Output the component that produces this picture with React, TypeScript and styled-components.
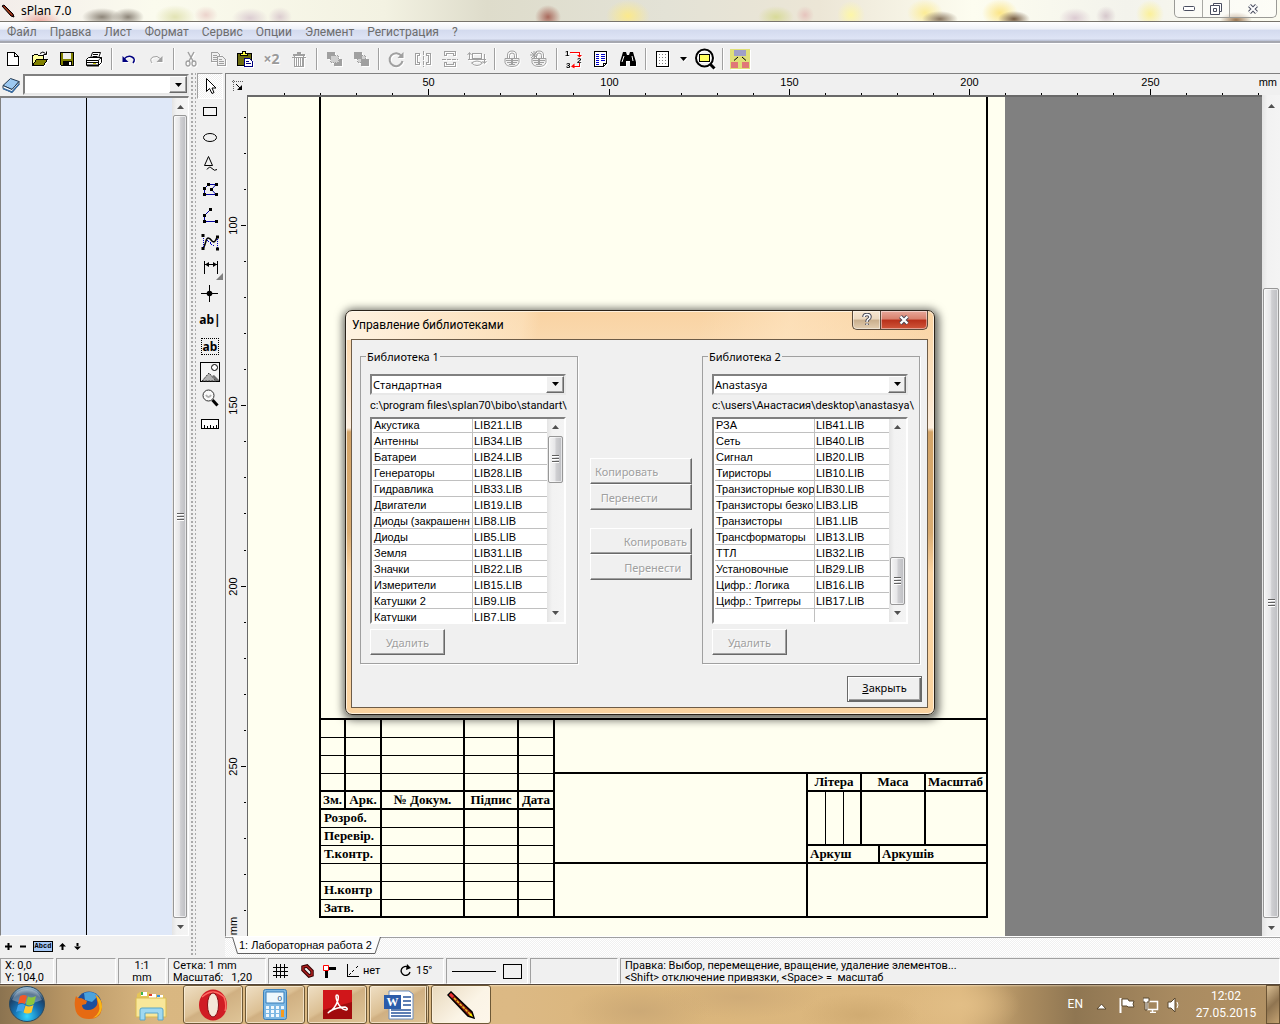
import React from "react";
import styled, { createGlobalStyle, css } from "styled-components";

const ui = `"Noto Sans", "DejaVu Sans", sans-serif`;
const narrow = `Roboto, "Noto Sans", sans-serif`;
const grid = `"Liberation Sans", Arial, sans-serif`;
const serif = `"Liberation Serif", "Times New Roman", serif`;

const Global = createGlobalStyle`
  * { box-sizing: border-box; }
  body { margin: 0; background: #f0f0f0; overflow: hidden; }
  button, select, input { font: inherit; color: inherit; }
`;

/* ---------- frame of the program ---------- */

const Desktop = styled.div`
  position: relative;
  display: flex;
  flex-direction: column;
  height: 100vh;
  font: 11px/14px ${ui};
  color: #000;
`;

const TitleBar = styled.header`
  display: flex;
  flex: none;
  height: 22px;
  border-bottom: 1px solid #77746c;
  background:
    radial-gradient(ellipse 22px 12px at 40px 22px, #efa9a0 0, transparent 100%),
    radial-gradient(ellipse 20px 9px at 102px 17px, #8d8579 0, transparent 100%),
    radial-gradient(ellipse 16px 9px at 128px 17px, #8d8579 0, transparent 100%),
    radial-gradient(ellipse 20px 12px at 175px 17px, #e2e3b4 0, transparent 100%),
    radial-gradient(ellipse 12px 9px at 206px 15px, #ecd3cc 0, transparent 100%),
    radial-gradient(ellipse 18px 10px at 250px 18px, #dccdd2 0, transparent 100%),
    radial-gradient(ellipse 12px 10px at 280px 17px, #dccdd0 0, transparent 100%),
    radial-gradient(ellipse 13px 12px at 548px 17px, #a9695c 0, transparent 100%),
    radial-gradient(ellipse 22px 16px at 628px 16px, #fbe98c 0, transparent 100%),
    radial-gradient(ellipse 18px 11px at 776px 17px, #d8da98 0, transparent 100%),
    radial-gradient(ellipse 9px 9px at 805px 15px, #e6c4bd 0, transparent 100%),
    radial-gradient(ellipse 14px 14px at 851px 15px, #fdf6a8 0, transparent 100%),
    radial-gradient(ellipse 18px 8px at 940px 19px, #8a7760 0, transparent 100%),
    radial-gradient(ellipse 18px 14px at 925px 13px, #fcec96 0, transparent 100%),
    radial-gradient(ellipse 16px 8px at 1014px 19px, #765c42 0, transparent 100%),
    radial-gradient(ellipse 18px 14px at 1000px 13px, #fce586 0, transparent 100%),
    radial-gradient(ellipse 16px 10px at 1075px 18px, #dccbd2 0, transparent 100%),
    radial-gradient(ellipse 10px 10px at 1106px 16px, #d6c8cc 0, transparent 100%),
    radial-gradient(ellipse 14px 14px at 1150px 14px, #fbf09a 0, transparent 100%),
    radial-gradient(ellipse 16px 8px at 1236px 20px, #9a7550 0, transparent 100%),
    linear-gradient(90deg, #f3edea 0, #fbfbee 12%, #f3f2e2 30%, #dedccb 38%, #e3e2d6 52%, #ece6d6 64%, #fdfdf0 76%, #f3f3ec 88%, #fbfbf0 100%);
`;

const AppTitle = styled.h1`
  display: flex;
  align-items: center;
  flex: 1;
  gap: 6px;
  margin: 0;
  padding-left: 1px;
  font: 12px/16px ${ui};
`;

const WindowButtons = styled.div`
  display: flex;
  height: 18px;
  margin-right: 3px;
  border: 1px solid #9a9a96;
  border-top: 0;
  border-radius: 0 0 5px 5px;
  background: rgba(255, 255, 255, 0.45);
`;

const WindowButton = styled.button<{ $wide?: boolean }>`
  display: grid;
  place-items: center;
  width: ${(p) => (p.$wide ? 47 : 27)}px;
  padding: 0;
  border: 0;
  border-left: 1px solid #a9a9a4;
  background: none;
  &:first-child { border-left: 0; }
`;

const MenuBar = styled.nav`
  display: flex;
  flex: none;
  align-items: center;
  gap: 13px;
  height: 21px;
  padding: 1px 7px 0;
  border-bottom: 2px solid #a6a8b0;
  background: linear-gradient(#fff 0, #eef1f8 38%, #d3daee 42%, #dee4f5 88%, #b5bccf 100%);
  font: 12px/16px ${narrow};
`;

const MenuItem = styled.button`
  padding: 0;
  border: 0;
  background: none;
  color: #6d6d6d;
`;

const Toolbar = styled.div`
  display: flex;
  flex: none;
  align-items: center;
  height: 30px;
  border-top: 1px solid #fff;
  svg { filter: drop-shadow(1px 1px 0 #fff); }
`;

const ToolButton = styled.button<{ $narrow?: boolean }>`
  display: grid;
  place-items: center;
  width: ${(p) => (p.$narrow ? 15 : 27)}px;
  height: 28px;
  padding: 0 2px 0 0;
  border: 0;
  background: none;
`;

const Separator = styled.span`
  width: 8px;
  height: 22px;
  border-left: 3px solid transparent;
  background: linear-gradient(90deg, #a0a0a0 1px, #fff 1px, #fff 2px, transparent 2px) padding-box;
`;

const Times = styled.span`
  color: #9a9a9a;
  font: bold 14px/20px ${ui};
  text-shadow: 1px 1px #fff;
`;

const Body = styled.main`
  display: flex;
  flex: 1;
  min-height: 0;
`;

/* ---------- scroll bars ---------- */

const ScrollTrack = styled.div<{ $w: number; $top?: number }>`
  display: flex;
  flex: none;
  flex-direction: column;
  width: ${(p) => p.$w}px;
  padding-top: ${(p) => p.$top ?? 0}px;
  background: linear-gradient(90deg, #e4e4e4, #f2f2f2 30%, #f4f4f4);
`;

const ScrollArrow = styled.button`
  display: grid;
  place-items: center;
  height: 17px;
  padding: 0;
  border: 0;
  background: none;
`;

const Space = styled.span<{ $grow: number }>`
  flex: ${(p) => p.$grow} 0 0;
`;

const Thumb = styled.span<{ $grow: number }>`
  display: grid;
  flex: ${(p) => p.$grow} 0 0;
  place-items: center;
  margin: 0 1px;
  border: 1px solid #979797;
  border-radius: 2px;
  background: linear-gradient(90deg, #f5f5f5, #e6e6e8 45%, #cfcfd2 55%, #bdbec2);
  box-shadow: inset 0 0 0 1px rgba(255, 255, 255, 0.6);
`;

const Arrow = ({ down }: { down?: boolean }) => (
  <svg width="7" height="4" viewBox="0 0 7 4" aria-hidden="true">
    <path d={down ? "M0 0h7L3.5 4z" : "M0 4h7L3.5 0z"} fill="#505050" />
  </svg>
);

function ScrollBar({ w, top, before, thumb, after }: { w: number; top?: number; before: number; thumb: number; after: number }) {
  return (
    <ScrollTrack $w={w} $top={top}>
      <ScrollArrow aria-label="Вверх"><Arrow /></ScrollArrow>
      <Space $grow={before} />
      <Thumb $grow={thumb}>
        <svg width="7" height="8" viewBox="0 0 7 8" shapeRendering="crispEdges" aria-hidden="true">
          <path d="M0 .5h7M0 3.5h7M0 6.5h7" stroke="#606060" />
          <path d="M0 1.5h7M0 4.5h7M0 7.5h7" stroke="#fff" />
        </svg>
      </Thumb>
      <Space $grow={after} />
      <ScrollArrow aria-label="Вниз"><Arrow down /></ScrollArrow>
    </ScrollTrack>
  );
}

/* ---------- drop-downs ---------- */

const ComboBox = styled.span`
  display: grid;
  flex: 1;
  grid-template-columns: 1fr 18px;
  height: 21px;
  border: 2px solid;
  border-color: #808080 #e8e8e8 #e8e8e8 #808080;
  background: #fff;
`;

const ComboSelect = styled.select`
  grid-area: 1 / 1 / 2 / 3;
  min-width: 0;
  padding: 1px 20px 0 1px;
  border: 0;
  border-radius: 0;
  outline: 0;
  appearance: none;
  background: none;
`;

const ComboArrow = styled.span`
  display: grid;
  grid-area: 1 / 2;
  place-items: center;
  border: 1px solid;
  border-color: #fff #696969 #696969 #fff;
  background: #f0f0f0;
  box-shadow: inset -1px -1px #a0a0a0;
  pointer-events: none;
`;

function Combo({ label, value }: { label: string; value: string }) {
  return (
    <ComboBox>
      <ComboSelect aria-label={label} defaultValue={value}>
        <option>{value}</option>
      </ComboSelect>
      <ComboArrow>
        <svg width="7" height="4" viewBox="0 0 7 4" aria-hidden="true"><path d="M0 0h7L3.5 4z" /></svg>
      </ComboArrow>
    </ComboBox>
  );
}

/* ---------- library panel on the left ---------- */

const LibraryPanel = styled.aside`
  display: flex;
  flex: none;
  flex-direction: column;
  width: 190px;
`;

const LibraryPicker = styled.div`
  display: flex;
  align-items: center;
  gap: 3px;
  height: 23px;
  padding: 0 1px 0 2px;
`;

const LibraryList = styled.div`
  display: flex;
  flex: 1;
  margin-right: 1px;
  border: 1px solid;
  border-width: 2px 1px 1px;
  border-color: #808080 #fff #fff #808080;
`;

const LibraryColumn = styled.div`
  flex: 1;
  background: #dfe8f8;
  & + & { border-left: 1px solid #000; }
`;

const LibraryTools = styled.div`
  display: flex;
  align-items: center;
  height: 21px;
  padding-left: 1px;
`;

const TinyButton = styled.button<{ $wide?: boolean }>`
  display: grid;
  place-items: center;
  width: ${(p) => (p.$wide ? 24 : 15)}px;
  height: 16px;
  padding: 0;
  border: 0;
  background: none;
`;

const AbcdTag = styled.span`
  width: 20px;
  height: 11px;
  border: 1px solid #000;
  background: #a5c8f5;
  font: bold 7px/9px "Liberation Mono", monospace;
`;

const Grip = styled.div`
  flex: none;
  width: 6px;
  background: radial-gradient(circle at 1px 1px, #a8a8a8 0 0.7px, transparent 1px) 1px 0 / 4px 4px;
`;

/* ---------- drawing tools ---------- */

const checker = css`
  background: repeating-conic-gradient(#fff 0 25%, #f0f0f0 0 50%) 0 0 / 2px 2px;
`;

const DrawTools = styled.div`
  display: flex;
  flex: none;
  flex-direction: column;
  width: 29px;
  padding: 0 2px 0 1px;
`;

const DrawTool = styled.button<{ $active?: boolean }>`
  display: grid;
  flex: none;
  place-items: center;
  height: 26px;
  padding: 0;
  border: 1px solid transparent;
  background: none;
  font: bold 12px/16px ${ui};
  ${(p) =>
    p.$active &&
    css`
      ${checker}
      border-color: #a0a0a0 #fff #fff #a0a0a0;
    `}
`;

/* ---------- sheet area ---------- */

const Workspace = styled.section`
  display: flex;
  flex: 1;
  flex-direction: column;
  min-width: 0;
  border-top: 1px solid #808080;
`;

const SheetView = styled.div`
  display: grid;
  flex: 1;
  grid-template: 21px minmax(0, 1fr) / 21px minmax(0, 1fr) 18px;
  min-height: 0;
  border-left: 1px solid #808080;
  border-bottom: 1px solid #fff;
`;

const Corner = styled.div`
  padding: 6px 0 0 6px;
`;

const TopRulerBox = styled.div`
  grid-column: 2 / 4;
  overflow: hidden;
`;

const SideRulerBox = styled.div`
  overflow: hidden;
`;

const RulerSvg = styled.svg`
  display: block;
  font: 11px ${grid};
`;

const Canvas = styled.div`
  display: flex;
  overflow: hidden;
  border: 1px solid #696969;
  border-width: 2px 0 0 1px;
  background: #808080;
`;

const Paper = styled.div`
  display: flex;
  flex: none;
  width: 757px;
  padding: 0 17px 18px 71px;
  background: #fffff0;
`;

const Frame = styled.div`
  display: flex;
  flex: 1;
  flex-direction: column;
  justify-content: flex-end;
  border: 2px solid #000;
  border-top: 0;
`;

const Stamp = styled.div`
  display: flex;
  border-top: 2px solid #000;
  font: bold 13px/15px ${serif};
`;

const Signatures = styled.table`
  flex: none;
  width: 234px;
  border-collapse: separate;
  border-spacing: 0;
  table-layout: fixed;
`;

const SignCell = styled.td<{ $heavy?: boolean; $last?: boolean; $label?: boolean }>`
  height: ${(p) => (p.$last ? 16 : 18)}px;
  padding: ${(p) => (p.$label ? "0 0 0 3px" : "0")};
  border: solid #000;
  border-width: 0 2px ${(p) => (p.$last ? 0 : p.$heavy ? 2 : 1)}px 0;
  text-align: ${(p) => (p.$label ? "left" : "center")};
  vertical-align: top;
  white-space: nowrap;
`;

const StampInfo = styled.div`
  display: flex;
  flex: 1;
  flex-direction: column;
`;

const StampRow = styled.div<{ $h: number; $rule?: boolean }>`
  display: flex;
  height: ${(p) => p.$h}px;
  border-bottom: ${(p) => (p.$rule ? "2px solid #000" : 0)};
`;

const StampCell = styled.div<{ $w?: number; $line?: number; $left?: boolean }>`
  flex: ${(p) => (p.$w ? "none" : "1")};
  width: ${(p) => (p.$w ? `${p.$w}px` : "auto")};
  padding-left: ${(p) => (p.$left ? 2 : 0)}px;
  border-right: ${(p) => p.$line ?? 0}px solid #000;
  text-align: ${(p) => (p.$left ? "left" : "center")};
  white-space: nowrap;
`;

const SheetTabs = styled.div`
  display: flex;
  flex: none;
  height: 20px;
  padding-left: 7px;
  border-top: 1px solid #a0a0a0;
  ${checker}
`;

const SheetTab = styled.button`
  display: flex;
  height: 17px;
  margin-top: -1px;
  padding: 0;
  border: 0;
  background: none;
  font: 11px/16px ${grid};
`;

const TabLabel = styled.span`
  padding-top: 1px;
  border-bottom: 1px solid #606060;
  background: #fcfcfc;
  line-height: 15px;
`;

/* ---------- status bar ---------- */

const StatusBar = styled.footer`
  display: flex;
  flex: none;
  gap: 2px;
  height: 27px;
  padding-top: 1px;
  font: 11px/12px ${narrow};
`;

const Panel = styled.div<{ $w?: number; $center?: boolean }>`
  display: flex;
  flex: ${(p) => (p.$w ? "none" : "1")};
  flex-direction: column;
  width: ${(p) => (p.$w ? `${p.$w}px` : "auto")};
  padding-top: 1px;
  padding-left: ${(p) => (p.$center ? 0 : 4)}px;
  border: 1px solid;
  border-color: #a0a0a0 #fff #fff #a0a0a0;
  text-align: ${(p) => (p.$center ? "center" : "left")};
  white-space: pre;
`;

const PanelIcons = styled(Panel)`
  flex-direction: row;
  align-items: center;
  padding-top: 0;
`;

const StatusButton = styled.button<{ $w: number }>`
  display: flex;
  align-items: center;
  gap: 4px;
  width: ${(p) => p.$w}px;
  padding: 0;
  border: 0;
  background: none;
`;

/* ---------- task bar ---------- */

const TaskBar = styled.footer`
  display: flex;
  flex: none;
  height: 40px;
  border-top: 1px solid #54463a;
  background:
    linear-gradient(rgba(255, 240, 210, 0.5) 0, rgba(255, 240, 210, 0) 2px),
    radial-gradient(ellipse 70px 26px at 640px 26px, #cca976 0, transparent 100%),
    radial-gradient(ellipse 80px 22px at 740px 12px, #d0ac78 0, transparent 100%),
    radial-gradient(ellipse 60px 22px at 860px 30px, #d0ab72 0, transparent 100%),
    radial-gradient(ellipse 60px 30px at 960px 20px, #e2be86 0, transparent 100%),
    linear-gradient(90deg, #8b7350 0, #b79564 5%, #d9b781 12%, #dcb984 40%, #dab57b 50%, #ddb87f 75%, #ac8d60 80%, #8f7652 84%, #a98b61 92%, #b39264 100%);
  color: #fff;
`;

const TaskButton = styled.button<{ $open?: boolean; $stack?: boolean; $active?: boolean }>`
  display: grid;
  place-items: center;
  width: 60px;
  margin-right: 2px;
  padding: 0;
  border: 0;
  background: none;
  ${(p) =>
    p.$open &&
    css`
      border: 1px solid #6d5836;
      border-radius: 3px;
      box-shadow: inset 0 0 0 1px rgba(255, 245, 225, 0.65);
      background: ${p.$active
        ? "linear-gradient(135deg, #e8d9bd, #fbf4e6 60%, #fdf6ea)"
        : "linear-gradient(150deg, #efdfc4, #dcc094 45%, #d0b082 50%, #dfc598)"};
    `}
  ${(p) =>
    p.$stack &&
    css`
      border-right: 3px double #6d5836;
    `}
`;

const TaskButtons = styled.div`
  display: flex;
  flex: 1;
`;

const StartButton = styled.button`
  width: 59px;
  padding: 0 6px 0 0;
  border: 0;
  background: none;
`;

const Tray = styled.div`
  display: flex;
  align-items: center;
  gap: 8px;
  font: 12px/17px ${narrow};
`;

const Clock = styled.time`
  width: 64px;
  margin-left: 5px;
  text-align: center;
`;

const ShowDesktop = styled.button`
  width: 14px;
  align-self: stretch;
  border: 1px solid #6a5334;
  background: linear-gradient(135deg, #d8bd92, #8f7450 50%, #c4a272);
`;

/* ---------- dialog ---------- */

const DialogLayer = styled.div`
  position: absolute;
  inset: 0;
  display: grid;
  place-items: center;
  pointer-events: none;
`;

const Dialog = styled.section`
  display: flex;
  flex-direction: column;
  width: 590px;
  padding: 0 6px 6px 5px;
  border: 1px solid #2a231a;
  border-radius: 7px;
  background:
    linear-gradient(100deg, rgba(255, 246, 232, 0.9) 0, rgba(255, 235, 205, 0.4) 30%, transparent 33%, transparent 60%, rgba(255, 230, 195, 0.6) 75%, rgba(250, 210, 160, 0.3) 100%) 0 0 / 100% 29px no-repeat,
    linear-gradient(#f9d3a2 0, #fbe3c6 20%, #fceede 29%, #d3a468 30%, #d9ac72 55%, #fbd4a2 65%, #fad3a0 100%);
  box-shadow: inset 0 0 0 1px rgba(255, 250, 240, 0.75), 1px 2px 9px 3px rgba(0, 0, 0, 0.6);
  pointer-events: auto;
`;

const DialogHead = styled.header`
  display: flex;
  align-items: flex-start;
  height: 28px;
`;

const DialogTitle = styled.h2`
  flex: 1;
  margin: 0;
  padding: 5px 0 0 1px;
  font: 12px/18px ${narrow};
`;

const CaptionButton = styled.button<{ $close?: boolean }>`
  display: grid;
  place-items: center;
  width: ${(p) => (p.$close ? 48 : 28)}px;
  height: 19px;
  padding: 0;
  border: 1px solid #5b4a3a;
  border-top: 0;
  border-radius: ${(p) => (p.$close ? "0 0 5px 0" : "0 0 0 5px")};
  border-right-width: ${(p) => (p.$close ? 1 : 0)}px;
  background: ${(p) =>
    p.$close
      ? "linear-gradient(#e8a89a 0, #d8806c 45%, #b8301a 50%, #d0563a 100%)"
      : "linear-gradient(#f8e6d0 0, #ecd8bf 45%, #c9ae8c 50%, #e3cdb0 100%)"};
  box-shadow: inset 0 0 0 1px rgba(255, 255, 255, 0.45);
  color: #fff;
`;

const DialogBody = styled.div`
  display: flex;
  flex-direction: column;
  gap: 12px;
  padding: 10px 5px 5px 8px;
  border: 1px solid #6d5c48;
  background: #f0f0f0;
`;

const Columns = styled.div`
  display: flex;
  padding-right: 2px;
`;

const Group = styled.fieldset`
  display: flex;
  flex: none;
  flex-direction: column;
  width: 218px;
  min-width: 0;
  margin: 0;
  padding: 10px 11px 8px 9px;
  border: 1px solid #a0a0a0;
  box-shadow: 1px 1px #fff;
`;

const Legend = styled.legend`
  margin-left: -4px;
  padding: 0 1px;
  background: #f0f0f0;
  line-height: 14px;
`;

const ComboLine = styled.div`
  display: flex;
`;

const PathLine = styled.p`
  margin: 4px 0;
  font-family: ${narrow};
  white-space: nowrap;
`;

const ListBox = styled.div`
  display: flex;
  justify-content: space-between;
  height: 207px;
  padding-left: 1px;
  overflow: hidden;
  border: 2px solid;
  border-color: #808080 #fff #fff #808080;
  background: #fff;
`;

const FileTable = styled.table`
  width: 174px;
  margin-top: -2px;
  align-self: flex-start;
  border-collapse: separate;
  border-spacing: 0;
  table-layout: fixed;
  font: 11px/14px ${grid};
`;

const FileCell = styled.td<{ $name?: boolean }>`
  height: 16px;
  padding: 1px 0 0 1px;
  overflow: hidden;
  border-bottom: 1px solid #c0c0c0;
  border-right: ${(p) => (p.$name ? "1px solid #c0c0c0" : 0)};
  white-space: nowrap;
`;

const Push = styled.button<{ $w: number; $align?: string; $main?: boolean }>`
  width: ${(p) => p.$w}px;
  height: 26px;
  padding: 2px 4px 0;
  border: 1px solid;
  border-color: #fff #696969 #696969 #fff;
  background: #f0f0f0;
  box-shadow: inset -1px -1px #a0a0a0;
  text-align: ${(p) => p.$align ?? "center"};
  &:disabled { color: #a0a0a0; text-shadow: 1px 1px #fff; }
  ${(p) =>
    p.$main &&
    css`
      border-color: #696969;
      padding: 0 4px 2px;
      box-shadow: inset 1px 1px #fff, inset -1px -1px #696969, inset -2px -2px #a0a0a0;
    `}
`;

const DeleteRow = styled.div`
  display: flex;
  margin-top: 5px;
`;

const Transfer = styled.div`
  display: flex;
  flex: 1;
  flex-direction: column;
  align-items: center;
  padding: 108px 0 0 2px;
`;

const Pair = styled.div`
  display: flex;
  flex-direction: column;
  margin-bottom: 18px;
`;

const Footer = styled.div`
  display: flex;
  justify-content: flex-end;
`;

/* ---------- data ---------- */

const menu = ["Файл", "Правка", "Лист", "Формат", "Сервис", "Опции", "Элемент", "Регистрация", "?"];

const standard = [
  ["Акустика", "LIB21.LIB"], ["Антенны", "LIB34.LIB"], ["Батареи", "LIB24.LIB"], ["Генераторы", "LIB28.LIB"],
  ["Гидравлика", "LIB33.LIB"], ["Двигатели", "LIB19.LIB"], ["Диоды (закрашенн", "LIB8.LIB"], ["Диоды", "LIB5.LIB"],
  ["Земля", "LIB31.LIB"], ["Значки", "LIB22.LIB"], ["Измерители", "LIB15.LIB"], ["Катушки 2", "LIB9.LIB"], ["Катушки", "LIB7.LIB"],
];

const anastasya = [
  ["РЗА", "LIB41.LIB"], ["Сеть", "LIB40.LIB"], ["Сигнал", "LIB20.LIB"], ["Тиристоры", "LIB10.LIB"],
  ["Транзисторные кор", "LIB30.LIB"], ["Транзисторы безко", "LIB3.LIB"], ["Транзисторы", "LIB1.LIB"], ["Трансформаторы", "LIB13.LIB"],
  ["ТТЛ", "LIB32.LIB"], ["Установочные", "LIB29.LIB"], ["Цифр.: Логика", "LIB16.LIB"], ["Цифр.: Триггеры", "LIB17.LIB"], ["", ""],
];

/* ---------- icons ---------- */

const Ico = ({ w = 20, h = 20, children }: { w?: number; h?: number; children: React.ReactNode }) => (
  <svg width={w} height={h} viewBox={`0 0 ${w} ${h}`} fill="none" aria-hidden="true">{children}</svg>
);
const crisp = { shapeRendering: "crispEdges" as const };
const G = "#a0a0a0";

type Item = { name: string; icon: React.ReactNode; narrow?: boolean } | null;

const pencil = (
  <Ico w={14} h={14}>
    <path d="M1 2l2-1 9 9 1 3-3-1z" fill="#8b1a10" stroke="#000" />
    <path d="M3 3l8 8" stroke="#a05020" />
  </Ico>
);

const lockBody = (
  <g>
    <path d="M5.500 9V6q0-4 4.500-4T14.500 6v3M7.500 9V6.500q0-2.500 2.500-2.500t2.500 2.500V9" stroke={G} />
    <path d="M3 9.500h14v4q-1 4-7 4t-7-4z" stroke={G} fill="#f0f0f0" />
    <path d="M4 11.500h12M5 13.500h10M7 15.500h6" stroke={G} />
    <path d="M10 10v5" stroke={G} strokeWidth="2" />
  </g>
);

const tools: Item[] = [
  { name: "Новый", icon: <Ico><path {...crisp} d="M4.500 3.500h7l4 4v9h-11zM11.500 3.500v4h4" fill="#fff" stroke="#000" /></Ico> },
  { name: "Открыть", icon: <Ico>
    <path {...crisp} d="M2.500 16V6.500h1l1-1h3l1 1h5v3" fill="#ffff9c" stroke="#000" />
    <path {...crisp} d="M2.500 16.500l4-6h11l-4 6z" fill="#808000" stroke="#000" />
    <path d="M10 4.500q3-3 5.500 0M13.500 5.500h3v-3" stroke="#000" />
  </Ico> },
  { name: "Сохранить", icon: <Ico><g {...crisp}>
    <path d="M3.500 3.500h13v13h-12l-1-1z" fill="#808000" stroke="#000" />
    <path d="M6 4h8v6H6z" fill="#f0f0f0" />
    <path d="M6 12h9v5H6z" fill="#000" /><path d="M12 13h2v3h-2z" fill="#fff" />
  </g></Ico> },
  { name: "Печать", icon: <Ico>
    <path d="M6.500 9L8.500 3.500h8L14.500 9" fill="#fff" stroke="#000" />
    <path d="M9 5.500h5M8.500 7.500h5" stroke="#000" />
    <path d="M2.500 10.500l2-2h13v5l-3 3h-12z" fill="#fff" stroke="#000" />
    <path d="M2.500 11.500h12v5M2.500 13.500h12M14.500 11l3-2.500" stroke="#000" /><path d="M9 14.500h3" stroke="#c8c800" /><path d="M3 16.500h12" stroke="#000" strokeWidth="2" />
  </Ico> },
  null,
  { name: "Отменить", icon: <Ico><path d="M5 10q4-4 8-2t1 6" stroke="#000080" strokeWidth="1.500" /><path d="M3.500 7v6h6z" fill="#000080" /></Ico> },
  { name: "Повторить", icon: <Ico><path d="M15 10q-4-4-8-2t-1 6" stroke={G} /><path d="M16.500 7v6h-6z" fill={G} /></Ico> },
  null,
  { name: "Вырезать", icon: <Ico><path d="M7 3l5 9M13 3l-5 9" stroke={G} strokeWidth="1.500" /><ellipse cx="7" cy="14.500" rx="2" ry="2.500" stroke={G} strokeWidth="1.300" /><ellipse cx="13" cy="14.500" rx="2" ry="2.500" stroke={G} strokeWidth="1.300" /></Ico> },
  { name: "Копировать", icon: <Ico><g {...crisp} stroke={G} fill="#f0f0f0"><path d="M3.500 3.500h6l2 2v7h-8z" /><path d="M5 6.500h4M5 8.500h4M5 10.500h4" /><path d="M9.500 7.500h5l3 3v6h-8z" /><path d="M11 10.500h3M11 12.500h5M11 14.500h5" /></g></Ico> },
  { name: "Вставить", icon: <Ico><g {...crisp}>
    <path d="M2.500 4.500h14v12h-14z" fill="#6b6b10" stroke="#000" /><path d="M5.500 6.500v-2h2v-2h3v2h2v2z" fill="#ffff40" stroke="#000" />
    <path d="M9.500 9.500h5l3 3v5h-8z" fill="#fff" stroke="#000080" /><path d="M11 12.500h3M11 14.500h5" stroke="#000080" />
  </g></Ico> },
  { name: "Дублировать", icon: <Times>×2</Times> },
  { name: "Удалить", icon: <Ico><g {...crisp} stroke={G}><path d="M4 5.500h12M8 3.500h4" strokeWidth="2" /><path d="M5.500 7v10.500h9V7M7.500 8v9M9.500 8v9M11.500 8v9M13 8v9" /><path d="M3 8.500h14" /></g></Ico> },
  null,
  { name: "На передний план", icon: <Ico><g {...crisp}><path d="M3 3h8v7H3z" fill={G} /><path d="M10 10h8v7h-8z" fill={G} /><path d="M6.500 6.500h8v7h-8z" fill="#d0d0d0" stroke={G} strokeDasharray="1 1" /></g></Ico> },
  { name: "На задний план", icon: <Ico><g {...crisp}><path d="M6.500 6.500h8v7h-8z" fill="#d0d0d0" stroke={G} strokeDasharray="1 1" /><path d="M3 3h8v7H3z" fill={G} /><path d="M10 10h8v7h-8z" fill={G} /></g></Ico> },
  null,
  { name: "Повернуть", icon: <Ico><path d="M15.500 7a6.500 6.500 0 1 0 1 5" stroke={G} strokeWidth="2" /><path d="M17.500 3v6h-6z" fill={G} /></Ico> },
  { name: "Зеркально по горизонтали", icon: <Ico><g {...crisp} stroke={G}><path d="M6.500 4.500h-4v11h4v-2h-2v-7h2zM13.500 4.500h4v11h-4v-2h2v-7h-2z" /><path d="M10 2v16" strokeDasharray="4 1" /></g></Ico> },
  { name: "Зеркально по вертикали", icon: <Ico><g {...crisp} stroke={G}><path d="M4.500 6.500v-4h11v4h-2v-2h-7v2zM4.500 13.500v4h11v-4h-2v2h-7v-2z" /><path d="M2 10h16" strokeDasharray="4 1" /></g></Ico> },
  { name: "Выровнять", icon: <Ico><g stroke={G}><path {...crisp} d="M5.500 4.500h9v5h-9z" /><path d="M1 10.500h18" /><path d="M4.500 14q5.500-4 11 0q-5.500 5-11 0M2.500 10V4M.5 6l2-2.500 2 2.500M17.500 5v9M15.500 12l2 2.500 2-2.500" /></g></Ico> },
  null,
  { name: "Закрепить", icon: <Ico>{lockBody}</Ico> },
  { name: "Открепить", icon: <Ico>{lockBody}<path d="M2 3l6 6M2 9l6-6M5 2v8M1 6h8" stroke={G} /></Ico> },
  null,
  { name: "Нумерация", icon: <Ico>
    <path {...crisp} d="M6 3.500h9v3M15.500 14v3.500H9" stroke="#f00" /><path d="M10.500 14.500l-3.500 3 3.500 2M13 6h5l-2.500 2.500z" fill="#f00" />
    <g fill="#000" fontFamily="Liberation Sans" fontWeight="bold" fontSize="8"><text x="1" y="7">1</text><text x="13" y="14">2</text><text x="2" y="19">3</text></g>
  </Ico> },
  { name: "Список", icon: <Ico><g {...crisp}><path d="M3.500 2.500h12v12l-3 3h-9z" fill="#fff" stroke="#000" /><path d="M12 18v-4h4" stroke="#000" /><path d="M5 5.500h3M5 7.500h3M5 9.500h3M5 11.500h3M5 13.500h3M5 15.500h3M10 5.500h4M10 7.500h4M10 9.500h4M10 11.500h4" stroke="#0000c8" /></g></Ico> },
  { name: "Поиск", icon: <Ico><path d="M5 3h3l1 3h2l1-3h3l3 10v4h-6v-5H8v5H2v-4z" fill="#000" /><path d="M6 7l-2 6M14 7l1 5" stroke="#fff" /></Ico> },
  null,
  { name: "Сетка", icon: <Ico><g {...crisp}><path d="M3.500 2.500h12v15h-12z" fill="#fff" stroke="#000" /><path d="M6 5.500h8M6 8.500h8M6 11.500h8M6 14.500h8" stroke="#808080" strokeDasharray="1 2" /></g></Ico> },
  { name: "Выбор сетки", narrow: true, icon: <Ico w={7} h={4}><path d="M0 0h7L3.500 4z" fill="#000" /></Ico> },
  { name: "Масштаб", icon: <Ico w={22} h={22}><circle cx="10.500" cy="10" r="8.500" stroke="#000" strokeWidth="2" /><path {...crisp} d="M5.500 6.500h10v7h-10z" fill="#ffff60" stroke="#000" /><path d="M16.500 16.500l4 4" stroke="#000" strokeWidth="3" /></Ico> },
  null,
  { name: "Библиотека", icon: <Ico><path d="M0 0h20v20H0z" fill="#e0e078" /><path d="M4 1h12v6H4z" fill="#a0a0c8" /><path d="M1 13h7v6H1zM12 13h7v6h-7z" fill="#e07878" /><path d="M8 8l-4 3.500M12 8l4 3.500" stroke="#000" /></Ico> },
];

const node = (x: number, y: number) => <path key={`${x}-${y}`} d={`M${x - 1.5} ${y - 1.5}h3v3h-3z`} fill="#000" />;

const drawTools: { name: string; icon: React.ReactNode }[] = [
  { name: "Выбор", icon: <Ico><path d="M6.500 2.500v13l3-3 2.500 5 2-1-2-4.500h4z" fill="#fff" stroke="#000" /></Ico> },
  { name: "Прямоугольник", icon: <Ico><path {...crisp} d="M3.500 5.500h13v8h-13z" stroke="#000" fill="#f4f4f4" /></Ico> },
  { name: "Эллипс", icon: <Ico><ellipse cx="10" cy="9.500" rx="6.500" ry="4" stroke="#000" /></Ico> },
  { name: "Фигура", icon: <Ico><path d="M8.500 2.500l-4 9h8zM7 15.500q2.500-4 5-1t5 1" stroke="#000" /></Ico> },
  { name: "Многоугольник", icon: <Ico><path d="M4.500 14.500V8.500l4-4h7.500l-4.500 5 4.500 5z" stroke="#0000a0" />{[[4.5, 14.5], [4.5, 8.5], [8.5, 4.5], [16.5, 4.5], [11.5, 9.5], [16.5, 14.5]].map(([x, y]) => node(x, y))}</Ico> },
  { name: "Линия", icon: <Ico><path d="M10.500 3.500l-6 6v6h12" stroke="#0000a0" />{[[10.5, 3.5], [4.5, 9.5], [4.5, 15.5], [16.5, 15.5]].map(([x, y]) => node(x, y))}</Ico> },
  { name: "Кривая Безье", icon: <Ico><path d="M2.500 17q2-2 3.500-8t6 0q3 3 5-4" stroke="#000" strokeWidth="1.500" /><path {...crisp} d="M3.500 4v12M17.500 5v12M7 8l10 9" stroke="#0000c0" strokeDasharray="1 1" />{[[3, 3.5], [3, 16.5], [17.5, 5], [17.5, 17]].map(([x, y]) => node(x, y))}</Ico> },
  { name: "Размер", icon: <Ico w={26} h={24}><path {...crisp} d="M6.500 5v13M19.500 5v13M7 8.500h12" stroke="#000" /><path d="M7 8.500l4-2.500v5zM19 8.500l-4-2.500v5z" fill="#000" /><path d="M25 17v7h-7z" fill="#808080" /></Ico> },
  { name: "Узел", icon: <Ico><path {...crisp} d="M1 9.500h17M9.500 1v17" stroke="#000" /><circle cx="9.500" cy="9.500" r="2.800" fill="#000" /></Ico> },
  { name: "Текст", icon: <span>ab|</span> },
  { name: "Текстовый блок", icon: <AbFrame /> },
  { name: "Рисунок", icon: <Ico><path {...crisp} d="M.5.5h19v19H.5z" stroke="#000" fill="#f4f4f4" /><circle cx="14.500" cy="5.500" r="3" stroke="#000" fill="#fff" /><path d="M2 19l7-8 7 8z" fill="#b0b0b0" stroke="#303030" strokeDasharray="2 1" /><path d="M12 14l2-1 5 5v1h-3z" fill="#707070" /></Ico> },
  { name: "Лупа", icon: <Ico><circle cx="8.500" cy="7.500" r="5.500" fill="#fafafa" stroke="#303030" /><path d="M6 7q2.500 4 5 0" stroke="#b0b0b0" strokeWidth="2" /><path d="M12.500 12l5 5.500" stroke="#000" strokeWidth="3" /></Ico> },
  { name: "Линейка", icon: <Ico><path {...crisp} d="M1.500 5.500h17v9h-17z" fill="#fff" stroke="#000" /><path {...crisp} d="M4.500 14v-3M7.500 14v-2M10.500 14v-3M13.500 14v-2M16.500 14v-3" stroke="#000" /></Ico> },
];

const Dotted = styled.span`
  padding: 0 1px;
  border: 1px dotted #000;
  line-height: 15px;
`;

function AbFrame() {
  return <Dotted>ab</Dotted>;
}

/* ---------- rulers: 50 mm take 180.3 px ---------- */

const MM = 3.606;

function TopRuler() {
  const marks = Array.from({ length: 28 }, (_, i) => (i + 1) * 10);
  return (
    <RulerSvg width="100%" height="21" shapeRendering="crispEdges">
      {marks.map((mm) => {
        const x = Math.round(mm * MM + 1) + 0.5;
        const major = mm % 50 === 0;
        return (
          <g key={mm}>
            <path d={`M${x} ${major ? 15 : 19}V21`} stroke="#000" />
            {major && <text x={x} y="12" textAnchor="middle">{mm}</text>}
          </g>
        );
      })}
      <text x="100%" dx="-3" y="12" textAnchor="end">mm</text>
    </RulerSvg>
  );
}

function SideRuler() {
  const marks = Array.from({ length: 23 }, (_, i) => 70 + i * 10);
  return (
    <RulerSvg width="21" height="100%" shapeRendering="crispEdges">
      {marks.map((mm) => {
        const y = Math.round((mm - 100) * MM + 130) + 0.5;
        const major = mm % 50 === 0;
        return (
          <g key={mm}>
            <path d={`M${major ? 15 : 18} ${y}H20`} stroke="#000" />
            {major && <text transform={`translate(11 ${y}) rotate(-90)`} textAnchor="middle">{mm}</text>}
          </g>
        );
      })}
      <text transform="translate(11 831) rotate(-90)" textAnchor="middle">mm</text>
    </RulerSvg>
  );
}

/* ---------- title block of the sheet ---------- */

function TitleBlock() {
  const head = ["Зм.", "Арк.", "№ Докум.", "Підпис", "Дата"];
  const people = ["Розроб.", "Перевір.", "Т.контр.", "", "Н.контр", "Затв."];
  return (
    <Stamp>
      <Signatures>
        <colgroup>
          {[25, 36, 83, 54, 36].map((w, i) => <col key={i} width={w} />)}
        </colgroup>
        <tbody>
          {[0, 1, 2, 3].map((r) => (
            <tr key={r}>{head.map((h) => <SignCell key={h} $heavy={r === 3} />)}</tr>
          ))}
          <tr>{head.map((h) => <SignCell as="th" key={h} $heavy>{h}</SignCell>)}</tr>
          {people.map((p, i) => (
            <tr key={i}>
              <SignCell as="th" colSpan={2} $label $last={i === 5}>{p}</SignCell>
              <SignCell $last={i === 5} /><SignCell $last={i === 5} /><SignCell $last={i === 5} />
            </tr>
          ))}
        </tbody>
      </Signatures>
      <StampInfo>
        <StampRow $h={54} $rule />
        <StampRow $h={90} $rule>
          <StampCell $w={253} $line={2} />
          <StampInfo>
            <StampRow $h={18} $rule>
              <StampCell $w={54} $line={2}>Літера</StampCell>
              <StampCell $w={64} $line={2}>Маса</StampCell>
              <StampCell $left>Масштаб</StampCell>
            </StampRow>
            <StampRow $h={54} $rule>
              <StampCell $w={18} $line={1} /><StampCell $w={18} $line={1} /><StampCell $w={18} $line={2} />
              <StampCell $w={64} $line={2} /><StampCell />
            </StampRow>
            <StampRow $h={16}>
              <StampCell $w={72} $line={2} $left>Аркуш</StampCell>
              <StampCell $left>Аркушів</StampCell>
            </StampRow>
          </StampInfo>
        </StampRow>
        <StampRow $h={52}>
          <StampCell $w={253} $line={2} />
        </StampRow>
      </StampInfo>
    </Stamp>
  );
}

/* ---------- library manager ---------- */

function Library(p: { title: string; value: string; path: string; rows: string[][]; before: number; after: number }) {
  return (
    <Group>
      <Legend>{p.title}</Legend>
      <ComboLine><Combo label={p.title} value={p.value} /></ComboLine>
      <PathLine>{p.path}</PathLine>
      <ListBox>
        <FileTable>
          <colgroup><col width={100} /><col width={74} /></colgroup>
          <tbody>
            {p.rows.map(([name, file], i) => (
              <tr key={i}><FileCell $name>{name}</FileCell><FileCell>{file}</FileCell></tr>
            ))}
          </tbody>
        </FileTable>
        <ScrollBar w={17} before={p.before} thumb={46} after={p.after} />
      </ListBox>
      <DeleteRow><Push $w={75} disabled>Удалить</Push></DeleteRow>
    </Group>
  );
}

function LibraryManager() {
  return (
    <DialogLayer>
      <Dialog role="dialog" aria-labelledby="manager-title">
        <DialogHead>
          <DialogTitle id="manager-title">Управление библиотеками</DialogTitle>
          <CaptionButton aria-label="Справка">
            <svg width="10" height="13" viewBox="0 0 10 13" fill="none" aria-hidden="true">
              <path d="M2 4q0-2.500 3-2.500T8 4q0 1.500-2 2.500-1 .5-1 2.500M5 10.500v1.500" stroke="#4a4a58" strokeWidth="3.500" />
              <path d="M2 4q0-2.500 3-2.500T8 4q0 1.500-2 2.500-1 .5-1 2.500M5 10.500v1.500" stroke="#fff" strokeWidth="1.500" />
            </svg>
          </CaptionButton>
          <CaptionButton $close aria-label="Закрыть окно">
            <svg width="12" height="10" viewBox="0 0 12 10" fill="none" aria-hidden="true">
              <path d="M2.500 1.500l7 7M9.500 1.500l-7 7" stroke="#4a4a58" strokeWidth="4" />
              <path d="M2.500 1.500l7 7M9.500 1.500l-7 7" stroke="#fff" strokeWidth="2.200" />
            </svg>
          </CaptionButton>
        </DialogHead>
        <DialogBody>
          <Columns>
            <Library title="Библиотека 1" value="Стандартная" path="c:\program files\splan70\bibo\standart\" rows={standard} before={0} after={123} />
            <Transfer>
              <Pair>
                <Push $w={102} $align="left" disabled>Копировать</Push>
                <Push $w={102} $align="left" disabled>{"\u00a0\u00a0Перенести"}</Push>
              </Pair>
              <Pair>
                <Push $w={102} $align="right" disabled>Копировать</Push>
                <Push $w={102} $align="right" disabled>{"Перенести\u00a0\u00a0"}</Push>
              </Pair>
            </Transfer>
            <Library title="Библиотека 2" value="Anastasya" path="c:\users\Анастасия\desktop\anastasya\" rows={anastasya} before={123} after={0} />
          </Columns>
          <Footer><Push $w={75} $main><u>З</u>акрыть</Push></Footer>
        </DialogBody>
      </Dialog>
    </DialogLayer>
  );
}

/* ---------- task bar icons ---------- */

const taskIcons = {
  start: (
    <svg width="38" height="38" viewBox="0 0 38 38" aria-hidden="true">
      <defs><radialGradient id="orb" cx="50%" cy="85%" r="80%"><stop offset="0" stopColor="#35d8ff" /><stop offset=".45" stopColor="#1673b4" /><stop offset=".8" stopColor="#1b3f66" /><stop offset="1" stopColor="#8fb0c8" /></radialGradient></defs>
      <circle cx="19" cy="19" r="17.500" fill="url(#orb)" stroke="#2b4a60" />
      <path d="M4 15Q8 4 19 4t15 11Q19 22 4 15z" fill="#fff" opacity=".3" />
      <path d="M12 11q4-2 7 0l-2 8q-3-2-7 0z" fill="#f0592a" /><path d="M20 11.500q4 2 8-.5l-2 8q-4 2.500-8 .5z" fill="#8cc63e" />
      <path d="M10 20q4-2 7 0l-2 7q-3-2-7 0z" fill="#3fa0e8" /><path d="M17.500 20.500q4 2 8-.5l-2 7.500q-4 2-8 0z" fill="#fdc62f" />
    </svg>
  ),
  firefox: (
    <svg width="30" height="30" viewBox="0 0 30 30" aria-hidden="true">
      <circle cx="15" cy="14" r="12.500" fill="#1d4f9e" /><path d="M10 3q9-3 14 3l-6 6-7-2z" fill="#4aa3df" />
      <path d="M2 6q2 3 5 2l6 3-1 3-4 1q0 5 6 5t9-5q1-6-2-10q7 4 7 11 0 13-13 13T1 17Q0 11 2 6z" fill="#e66a12" />
      <path d="M22 5q6 4 6 12-1 9-9 11 8-5 6-13z" fill="#f9b817" />
    </svg>
  ),
  explorer: (
    <svg width="33" height="32" viewBox="0 0 33 32" aria-hidden="true">
      <path d="M2 5l3-2h9l2 3h13v22H2z" fill="#e5c558" /><path d="M6 3h6v4H6zM14 5h7v4h-7zM22 6h6v4h-6z" fill="#fff" /><path d="M6 3h2v3H6z" fill="#3ab54a" /><path d="M14 5h3v2h-3z" fill="#e03a2a" /><path d="M22 6h3v2h-3z" fill="#3590e0" />
      <path d="M1 9h30v19H1z" fill="#f9e79a" stroke="#d9bb52" />
      <path d="M5 31V21q0-2 2-2h19q2 0 2 2v10h-5v-7H10v7z" fill="#9fd8f0" stroke="#5aa6c8" />
    </svg>
  ),
  opera: (
    <svg width="30" height="34" viewBox="0 0 30 34" aria-hidden="true">
      <ellipse cx="15" cy="17" rx="14" ry="15.500" fill="#d01c24" /><path d="M4 9q11-10 22 0 3 8 1 14" fill="none" stroke="#ff6b62" strokeWidth="1.500" />
      <ellipse cx="15" cy="17" rx="5.500" ry="12" fill="#f4e7d8" stroke="#8a0f14" />
    </svg>
  ),
  calc: (
    <svg width="24" height="31" viewBox="0 0 24 31" aria-hidden="true">
      <rect x=".5" y=".5" width="23" height="30" rx="2" fill="#7db8e4" stroke="#3b7fb8" /><path d="M3 3h18v11H3z" fill="#eef8fd" stroke="#3b7fb8" />
      <text x="19" y="12" textAnchor="end" fontSize="8" fontFamily="Liberation Sans" fill="#1c4b78">0</text>
      <g fill="#f0f8fd">{[0, 1, 2].map((r) => [0, 1, 2, 3].map((c) => <path key={`${r}${c}`} d={`M${3 + c * 5} ${17 + r * 4}h3v3h-3z`} />))}</g>
      <path d="M18 21h3v7h-3z" fill="#f79a1d" />
    </svg>
  ),
  acrobat: (
    <svg width="29" height="29" viewBox="0 0 29 29" aria-hidden="true">
      <path d="M0 0h29v29H0z" fill="#a00b0d" /><path d="M0 0h29v12L0 20z" fill="#d0161a" />
      <path d="M6 22q6-3 9-12 1-5-1-5t0 6q3 8 9 9 3-1-1-3-7 0-15 4-3 3-1 1z" fill="none" stroke="#fff" strokeWidth="1.500" />
    </svg>
  ),
  word: (
    <svg width="31" height="30" viewBox="0 0 31 30" aria-hidden="true">
      <path d="M6 1h20l4 3v25H6z" fill="#fff" stroke="#6d8fc0" /><path d="M20 7h8M20 11h8M20 15h8M8 20h20M8 23h20M8 26h20" stroke="#2a569c" strokeWidth="1.500" />
      <path d="M1 5h17v14H1z" fill="#2b5caa" /><text x="9.500" y="16" textAnchor="middle" fontSize="12" fontWeight="bold" fontFamily="Liberation Serif" fill="#fff">W</text>
    </svg>
  ),
  pencil: (
    <svg width="28" height="28" viewBox="0 0 28 28" aria-hidden="true">
      <path d="M1 4l3-3 21 20 2 6-6-2z" fill="#8b1a10" stroke="#000" strokeWidth="1.500" /><path d="M7 7l16 16" stroke="#e8c828" strokeWidth="1.500" strokeDasharray="3 1" /><path d="M2 4l2-2 3 3-2 2z" fill="#e33" /><path d="M24 22l2 4-4-2z" fill="#ff0" />
    </svg>
  ),
};

/* ---------- the window ---------- */

export default function App() {
  return (
    <Desktop>
      <Global />
      <TitleBar>
        <AppTitle>{pencil}sPlan 7.0</AppTitle>
        <WindowButtons>
          <WindowButton aria-label="Свернуть"><Ico w={12} h={5}><rect x=".5" y=".5" width="11" height="4" rx="1" fill="#fff" stroke="#4a4e60" /></Ico></WindowButton>
          <WindowButton aria-label="Развернуть"><Ico w={12} h={12}><path d="M3.500 2.500v-2h8v8h-2" stroke="#4a4e60" fill="#fff" /><path d="M.5 2.500h9v9h-9zM3.500 5.500h3v3h-3z" stroke="#4a4e60" fill="#fff" /></Ico></WindowButton>
          <WindowButton $wide aria-label="Закрыть программу"><Ico w={12} h={10}><path d="M2.500 1.500l7 7M9.500 1.500l-7 7" stroke="#4a4e60" strokeWidth="4" /><path d="M2.500 1.500l7 7M9.500 1.500l-7 7" stroke="#fff" strokeWidth="2" /></Ico></WindowButton>
        </WindowButtons>
      </TitleBar>
      <MenuBar>{menu.map((m) => <MenuItem key={m}>{m}</MenuItem>)}</MenuBar>
      <Toolbar>
        {tools.map((t, i) =>
          t ? <ToolButton key={i} $narrow={t.narrow} aria-label={t.name}>{t.icon}</ToolButton> : <Separator key={i} />
        )}
      </Toolbar>

      <Body>
        <LibraryPanel>
          <LibraryPicker>
            <Ico w={18} h={18}><path d="M1 9.500L8.500 2.500 17 5.500 10 13.500z" fill="#9cc8f0" stroke="#203850" /><path d="M1 9.500v3l9 4 7-8v-3l-7 8z" fill="#fff" stroke="#203850" /><path d="M1 12.500l9 3.500 7-8" stroke="#3a6ea5" strokeWidth="1.500" /></Ico>
            <Combo label="Библиотека" value="" />
          </LibraryPicker>
          <LibraryList>
            <LibraryColumn /><LibraryColumn />
            <ScrollBar w={16} before={0} thumb={800} after={0} />
          </LibraryList>
          <LibraryTools>
            <TinyButton aria-label="Добавить"><Ico w={7} h={7}><path d="M0 3.500h7M3.500 0v7" stroke="#000" strokeWidth="2" /></Ico></TinyButton>
            <TinyButton aria-label="Убрать"><Ico w={7} h={7}><path d="M0 3.500h6" stroke="#000" strokeWidth="2" /></Ico></TinyButton>
            <TinyButton $wide aria-label="Подписи"><AbcdTag>Abcd</AbcdTag></TinyButton>
            <TinyButton aria-label="Выше"><Ico w={7} h={7}><path d="M3.500 0L7 3.500H0zM2.500 3h2v4h-2z" fill="#000" /></Ico></TinyButton>
            <TinyButton aria-label="Ниже"><Ico w={7} h={7}><path d="M3.500 7L7 3.500H0zM2.500 0h2v4h-2z" fill="#000" /></Ico></TinyButton>
          </LibraryTools>
        </LibraryPanel>
        <Grip />
        <DrawTools>
          {drawTools.map((t, i) => <DrawTool key={t.name} $active={i === 0} aria-label={t.name}>{t.icon}</DrawTool>)}
        </DrawTools>

        <Workspace>
          <SheetView>
            <Corner><Ico w={11} h={11}><path {...crisp} d="M0 1.500h11M1.500 0v11" stroke="#606060" strokeDasharray="1 1" /><path d="M4 4l5 5" stroke="#000" /><path d="M10 5v5H5z" fill="#000" /></Ico></Corner>
            <TopRulerBox><TopRuler /></TopRulerBox>
            <SideRulerBox><SideRuler /></SideRulerBox>
            <Canvas><Paper><Frame><TitleBlock /></Frame></Paper></Canvas>
            <ScrollBar w={18} top={2} before={174} thumb={627} after={1} />
          </SheetView>
          <SheetTabs>
            <SheetTab>
              <svg width="7" height="17" viewBox="0 0 7 17" aria-hidden="true"><path d="M0 0h7v17L5 16z" fill="#fcfcfc" /><path d="M.5 0L5.500 16.500H7" fill="none" stroke="#606060" /></svg>
              <TabLabel>1: Лабораторная работа 2</TabLabel>
              <svg width="9" height="17" viewBox="0 0 9 17" aria-hidden="true"><path d="M0 0h8L3 16H0z" fill="#fcfcfc" /><path d="M0 16.500h3L8.500 0" fill="none" stroke="#606060" /></svg>
            </SheetTab>
          </SheetTabs>
        </Workspace>
      </Body>

      <StatusBar>
        <Panel $w={54}><span>X: 0,0</span><span>Y: 104,0</span></Panel>
        <Panel $w={60} />
        <Panel $w={48} $center><span>1:1</span><span>mm</span></Panel>
        <Panel $w={98}><span>Сетка: 1 mm</span><span>Масштаб:   1,20</span></Panel>
        <PanelIcons $w={176}>
          <StatusButton $w={27} aria-label="Сетка"><Ico w={16} h={14}><path {...crisp} d="M3.500 0v14M7.500 0v14M11.500 0v14M0 3.500h15M0 7.500h15M0 11.500h15" stroke="#000" /></Ico></StatusButton>
          <StatusButton $w={22} aria-label="Привязка"><Ico w={16} h={14}><path d="M3 3l4-1 5 5v4l-3 1-6-6z" stroke="#300" strokeWidth="3.500" /><path d="M3 3l4-1 5 5v4l-3 1-6-6z" stroke="#b02020" strokeWidth="1.500" /></Ico></StatusButton>
          <StatusButton $w={25} aria-label="Захват"><Ico w={16} h={14}><path d="M6 3h8v3H6zM3 5h3v9H3z" fill="#000" /><path d="M1.500 1.500h5v5h-5z" stroke="#f00" fill="#fff" /></Ico></StatusButton>
          <StatusButton $w={53}><Ico w={12} h={14}><path {...crisp} d="M.5 0v12.500H12" stroke="#000" /><path {...crisp} d="M2 11L11 2" stroke="#000" strokeDasharray="1 1" /></Ico>нет</StatusButton>
          <StatusButton $w={40}><Ico w={12} h={14}><path d="M8 3a4.500 4.500 0 1 0 2 5" stroke="#000" strokeWidth="1.300" /><path d="M7 0l4 4-5 2z" fill="#000" /></Ico>15°</StatusButton>
        </PanelIcons>
        <PanelIcons $w={82}>
          <Ico w={74} h={18}><path {...crisp} d="M1 9.500h44" stroke="#000" /><path {...crisp} d="M52.500 2.500h18v14h-18z" stroke="#000" /></Ico>
        </PanelIcons>
        <Panel $w={88} />
        <Panel><span>Правка: Выбор, перемещение, вращение, удаление элементов...</span><span>{"<Shift> отключение привязки, <Space> =  масштаб"}</span></Panel>
      </StatusBar>

      <TaskBar>
        <TaskButtons>
          <StartButton aria-label="Пуск">{taskIcons.start}</StartButton>
          <TaskButton aria-label="Firefox">{taskIcons.firefox}</TaskButton>
          <TaskButton aria-label="Проводник">{taskIcons.explorer}</TaskButton>
          <TaskButton $open aria-label="Opera">{taskIcons.opera}</TaskButton>
          <TaskButton $open aria-label="Калькулятор">{taskIcons.calc}</TaskButton>
          <TaskButton $open aria-label="Acrobat">{taskIcons.acrobat}</TaskButton>
          <TaskButton $open $stack aria-label="Word">{taskIcons.word}</TaskButton>
          <TaskButton $open $active aria-label="sPlan">{taskIcons.pencil}</TaskButton>
        </TaskButtons>
        <Tray>
          <span>EN</span>
          <Ico w={20} h={20}><path d="M6 14l4.500-5 4.500 5z" fill="#fff" stroke="#5a482e" /></Ico>
          <Ico w={16} h={16}><path d="M1.500 1v15" stroke="#fff" strokeWidth="2" /><path d="M3 2h6l1 2h5l-1 3 1 3H9L8 9H3z" fill="#fff" stroke="#5a482e" /></Ico>
          <Ico w={16} h={16}><path d="M4.500 4.500h10v8h-10zM7 15.500h6M9.500 13v2" stroke="#fff" strokeWidth="1.500" /><path d="M0 1h6v4H4v8H2V5H0z" fill="#fff" stroke="#5a482e" /></Ico>
          <Ico w={14} h={16}><path d="M1 5h3l4-4v14l-4-4H1z" fill="#fff" stroke="#5a482e" /><path d="M10 5q2 3 0 6" stroke="#fff" /></Ico>
          <Clock>12:02<br />27.05.2015</Clock>
          <ShowDesktop aria-label="Показать рабочий стол" />
        </Tray>
      </TaskBar>
      <LibraryManager />
    </Desktop>
  );
}
